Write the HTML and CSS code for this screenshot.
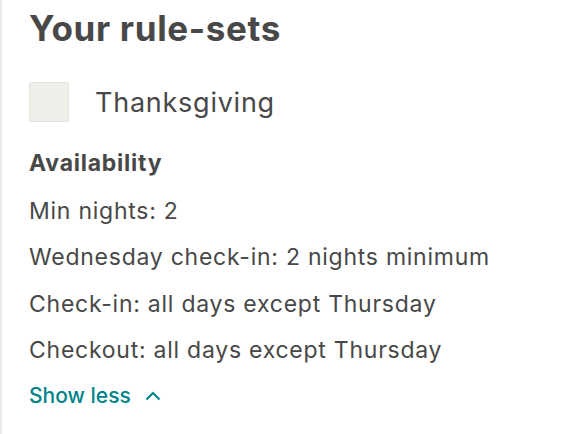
FILE: index.html
```html
<!DOCTYPE html>
<html>
<head>
<meta charset="utf-8">
<link rel="stylesheet" href="styles.css">
</head>
<body>
<div class="panel">
  <h1 class="title">Your rule-sets</h1>
  <div class="ruleset">
    <span class="swatch"></span>
    <span class="name">Thanksgiving</span>
  </div>
  <h2 class="section">Availability</h2>
  <ul class="rules">
    <li>Min nights: 2</li>
    <li>Wednesday check-in: 2 nights minimum</li>
    <li>Check-in: all days except Thursday</li>
    <li>Checkout: all days except Thursday</li>
  </ul>
  <a class="toggle" href="#">Show less
    <svg class="chev" width="16" height="10" viewBox="0 0 16 10"><path d="M1.5 8.5 L8 2 L14.5 8.5" fill="none" stroke="#008489" stroke-width="2"/></svg>
  </a>
</div>
</body>
</html>
```
FILE: styles.css
```css
html, body { margin: 0; padding: 0; background: #fff; }
body { font-family: "Inter", "Liberation Sans", sans-serif; color: #484848; }
.panel {
  border-left: 2px solid #ebebeb;
  padding: 6px 0 0 27px;
  height: 428px;
}
.title { margin: 0; font-size: 35px; font-weight: 700; line-height: 44px; letter-spacing: 0.65px; }
.ruleset { display: flex; align-items: center; gap: 26px; margin-top: 32px; }
.swatch { width: 38px; height: 38px; background: #f0eee9; border: 1px solid #e6e4df; border-radius: 2px; }
.name { font-size: 27px; letter-spacing: 0.75px; }
.section { margin: 26px 0 0; font-size: 23px; font-weight: 700; line-height: 30px; letter-spacing: 0.75px; }
.rules { list-style: none; margin: 0; padding: 0; }
.rules li { font-size: 23px; line-height: 28px; margin-top: 18.3px; letter-spacing: 0.75px; }
.rules li:first-child { margin-top: 19px; }
.toggle { display: inline-flex; align-items: center; gap: 14px; margin-top: 18px; color: #008489; text-decoration: none; font-size: 21px; font-weight: 500; line-height: 28px; }
```
